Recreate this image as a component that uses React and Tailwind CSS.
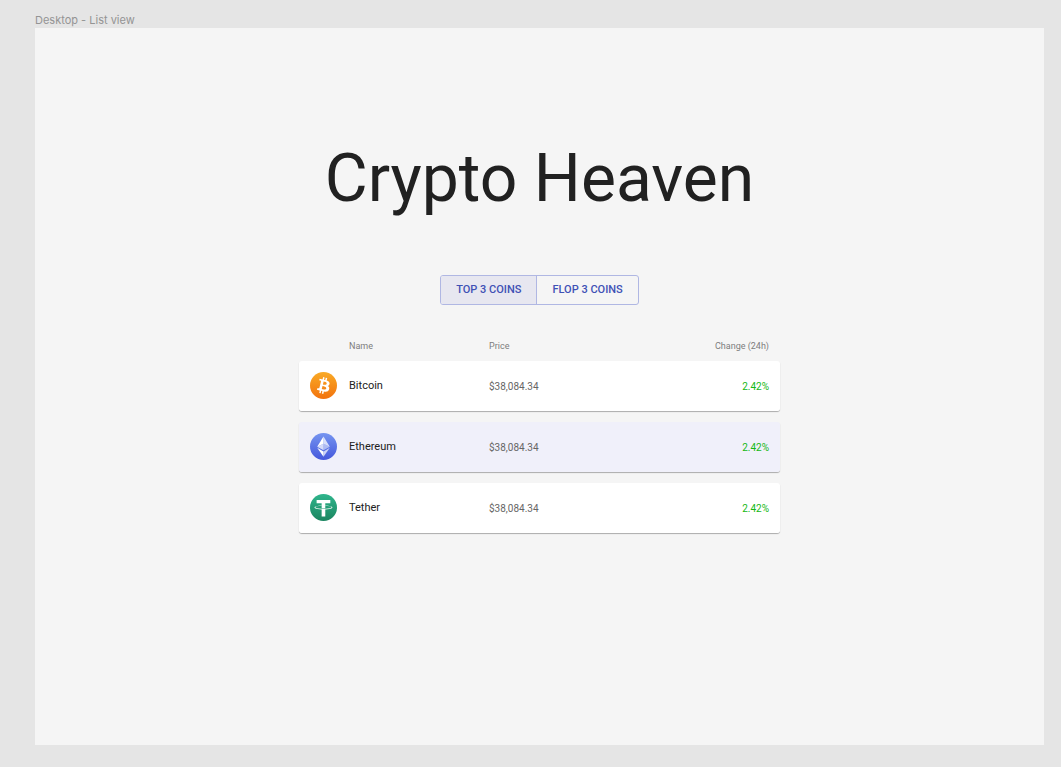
import { useState } from "react";

function BitcoinIcon() {
  return (
    <svg viewBox="0 0 32 32" className="block size-[27px]" aria-hidden="true">
      <defs>
        <linearGradient id="btc" x1="0" y1="0" x2="0" y2="1">
          <stop offset="0" stopColor="#f9aa26" />
          <stop offset="1" stopColor="#f2730e" />
        </linearGradient>
      </defs>
      <circle cx="16" cy="16" r="16" fill="url(#btc)" />
      <path
        fill="#fff"
        d="M23.189 14.02c.314-2.096-1.283-3.223-3.465-3.975l.708-2.84-1.728-.43-.69 2.765c-.454-.114-.92-.22-1.385-.326l.695-2.783L15.596 6l-.708 2.839c-.376-.086-.746-.17-1.104-.26l.002-.009-2.384-.595-.46 1.846s1.283.294 1.256.312c.7.175.826.638.805 1.006l-.806 3.235c.048.012.11.03.18.057l-.183-.045-1.13 4.532c-.086.212-.303.531-.793.41.018.025-1.256-.313-1.256-.313l-.858 1.978 2.25.561c.418.105.828.215 1.231.318l-.715 2.872 1.727.43.708-2.84c.472.127.93.245 1.378.357l-.706 2.828 1.728.43.715-2.866c2.948.558 5.164.333 6.097-2.333.752-2.146-.037-3.385-1.588-4.192 1.13-.26 1.98-1.003 2.207-2.538zm-3.95 5.538c-.533 2.147-4.148.986-5.32.695l.95-3.805c1.172.293 4.929.872 4.37 3.11zm.535-5.569c-.487 1.953-3.495.96-4.47.717l.86-3.45c.975.243 4.118.696 3.61 2.733z"
      />
    </svg>
  );
}

function EthereumIcon() {
  return (
    <svg viewBox="0 0 32 32" className="block size-[27px]" aria-hidden="true">
      <defs>
        <linearGradient id="eth" x1="0" y1="0" x2="0" y2="1">
          <stop offset="0" stopColor="#7594f0" />
          <stop offset="1" stopColor="#4558dc" />
        </linearGradient>
      </defs>
      <circle cx="16" cy="16" r="16" fill="url(#eth)" />
      <path fill="#fff" d="M16 4v8.87l7.5 3.35z" fillOpacity=".75" />
      <path fill="#fff" d="M16 4 8.5 16.22l7.5-3.35z" />
      <path fill="#fff" d="M16 21.97V28l7.5-10.38z" fillOpacity=".7" />
      <path fill="#fff" d="M16 28v-6.03l-7.5-4.35z" />
      <path fill="#fff" d="m16 20.57 7.5-4.35-7.5-3.35z" fillOpacity=".5" />
      <path fill="#fff" d="m8.5 16.22 7.5 4.35v-7.7z" fillOpacity=".75" />
    </svg>
  );
}

function TetherIcon() {
  return (
    <svg viewBox="0 0 32 32" className="block size-[27px]" aria-hidden="true">
      <defs>
        <linearGradient id="usdt" x1="0" y1="0" x2="0" y2="1">
          <stop offset="0" stopColor="#2fb58c" />
          <stop offset="1" stopColor="#1b8560" />
        </linearGradient>
      </defs>
      <circle cx="16" cy="16" r="16" fill="url(#usdt)" />
      <path
        fill="#fff"
        d="M17.922 17.383v-.002c-.11.008-.677.042-1.942.042-1.01 0-1.721-.03-1.971-.042v.003c-3.888-.171-6.79-.848-6.79-1.658 0-.809 2.902-1.486 6.79-1.66v2.644c.254.018.982.061 1.988.061 1.207 0 1.812-.05 1.925-.06v-2.643c3.88.173 6.775.85 6.775 1.658 0 .81-2.895 1.485-6.775 1.657m0-3.59v-2.366h5.414V7.819H8.595v3.608h5.414v2.365c-4.4.202-7.709 1.074-7.709 2.118 0 1.044 3.309 1.915 7.709 2.118v7.582h3.913v-7.584c4.393-.202 7.694-1.073 7.694-2.116 0-1.043-3.301-1.914-7.694-2.117"
        transform="translate(-1.6 -1.6) scale(1.1)"
      />
    </svg>
  );
}

const coins = [
  { name: "Bitcoin", price: "$38,084.34", change: "2.42%", Icon: BitcoinIcon },
  { name: "Ethereum", price: "$38,084.34", change: "2.42%", Icon: EthereumIcon, active: true },
  { name: "Tether", price: "$38,084.34", change: "2.42%", Icon: TetherIcon },
];

const tabs = ["TOP 3 COINS", "FLOP 3 COINS"];

export default function App() {
  const [tab, setTab] = useState(0);

  return (
    <div className="flex min-h-screen flex-col bg-[#e5e5e5] pt-3 pr-[17px] pb-[22px] pl-[35px] font-[Roboto,sans-serif]">
      <p className="font-[Inter,sans-serif] text-[11px] leading-4 text-[#949494]">Desktop - List view</p>
      <main className="flex flex-1 flex-col items-center bg-[#f5f5f5] px-4 pt-[111px] pb-10">
        <h1 className="text-center text-[66px] leading-[80px] text-[#212121]">Crypto Heaven</h1>

        <div role="group" aria-label="Coin ranking" className="mt-14 flex rounded-[3px] border border-[#b0b7e3]">
          {tabs.map((label, i) => (
            <button
              key={label}
              type="button"
              aria-pressed={tab === i}
              onClick={() => setTab(i)}
              className={`h-7 px-[15px] text-[11px] leading-4 font-medium text-[#3f51b5] first:rounded-l-[2px] not-first:border-l not-first:border-[#b0b7e3] ${
                tab === i ? "bg-[#e7e7f0]" : ""
              }`}
            >
              {label}
            </button>
          ))}
        </div>

        <table className="mt-[26px] w-full max-w-[481px] table-fixed border-separate border-spacing-x-0 border-spacing-y-[11px]">
          <thead>
            <tr className="text-left text-[9px] leading-[8px] text-[#7d7d7d]">
              <td className="w-[50px] p-0" />
              <th scope="col" className="w-[140px] p-0 font-normal">Name</th>
              <th scope="col" className="p-0 font-normal">Price</th>
              <th scope="col" className="p-0 pr-[11px] text-right font-normal">Change (24h)</th>
            </tr>
          </thead>
          <tbody>
            {coins.map(({ name, price, change, Icon, active }) => (
              <tr
                key={name}
                className={`h-[50px] rounded-[3px] text-[10px] text-[#666666] shadow-[0_1px_1px_rgba(0,0,0,0.3)] ${
                  active ? "*:bg-[#f0f0fa]" : "*:bg-white"
                }`}
              >
                <td className="rounded-l-[3px] p-0 pb-[2px] pl-[11px]">
                  <Icon />
                </td>
                <td className="p-0 text-[11px] text-[#212121]">{name}</td>
                <td className="p-0">{price}</td>
                <td className="rounded-r-[3px] p-0 pr-[11px] text-right text-[#14b814]">{change}</td>
              </tr>
            ))}
          </tbody>
        </table>
      </main>
    </div>
  );
}
